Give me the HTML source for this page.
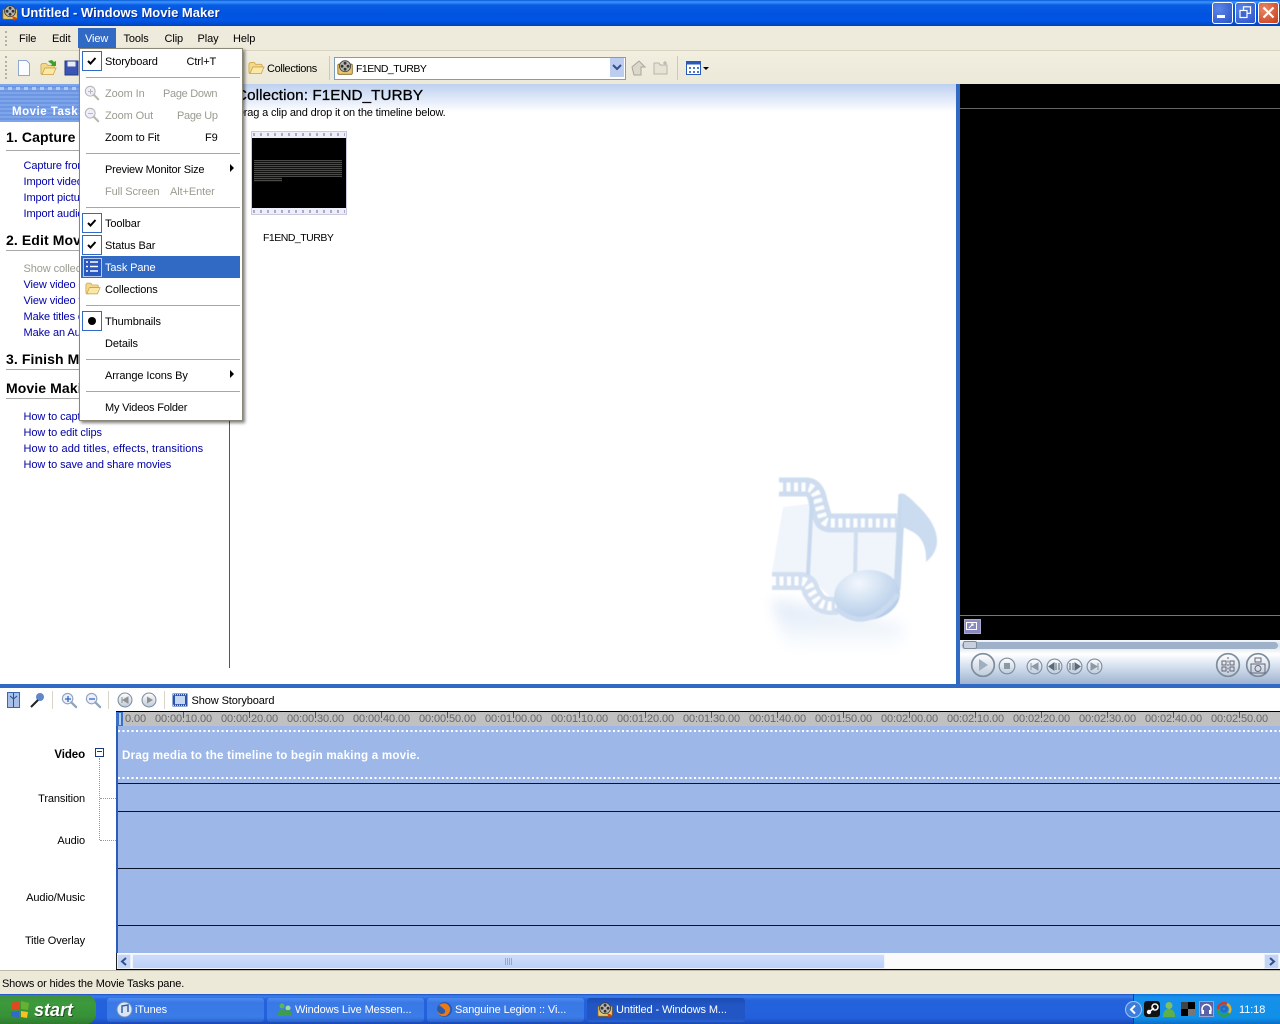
<!DOCTYPE html>
<html><head><meta charset="utf-8"><title>Untitled - Windows Movie Maker</title>
<style>
html,body{margin:0;padding:0;width:1280px;height:1024px;overflow:hidden;background:#fff}
body{position:relative;font:11px "Liberation Sans",sans-serif;color:#000;letter-spacing:-.1px}
div,span,svg{position:absolute}
span{white-space:nowrap;line-height:14px;margin-top:1px}
.l{color:#0000a8;left:23.5px}
.g{color:#9b9b90}
.h{font-weight:bold;font-size:14px;left:6px;line-height:16px;height:16px;letter-spacing:.1px}
.u{left:6px;width:216px;height:1px;background:#a8a8a8}
.sep{left:86px;width:154px;height:1px;background:#aca899}
.cb{left:82px;width:18px;height:18px;border:1px solid #316ac5}
.tr{left:118px;width:1162px;height:1px;background:#0a1428}
.rl{top:711px;color:#666;font-size:11px;letter-spacing:-.1px}
.tl{text-align:right;right:1195px}
.tb{top:998px;height:24px;background:linear-gradient(#4c8cf0,#3a78e6 20%,#3b7ce8 80%,#2c62c8);border-radius:3px;color:#fff}
.tb span{top:4px;left:28px;color:#fff}
.f1{font-size:10.5px;letter-spacing:-.5px}
</style></head><body>
<svg width="0" height="0" style="left:0;top:0"><defs>
<symbol id="folder" viewBox="0 0 18 16"><path d="M1 3.5 2.500 2h4L8 4h6l1 1v2H6L4 14H2L1 13z" fill="#f5d98a" stroke="#c8a048" stroke-width=".8"/><path d="M5 7h12l-3 7H2z" fill="#fbe8a6" stroke="#c8a048" stroke-width=".8"/></symbol>
<symbol id="reel" viewBox="0 0 20 20"><rect x="1" y="6" width="17" height="12" rx="1.500" fill="#e8c868" stroke="#806020"/><circle cx="9.500" cy="8.500" r="6.500" fill="#b8b8b0" stroke="#404040"/><circle cx="9.500" cy="5" r="1.700" fill="#333"/><circle cx="6" cy="8.500" r="1.700" fill="#333"/><circle cx="13" cy="8.500" r="1.700" fill="#333"/><circle cx="9.500" cy="12" r="1.700" fill="#333"/></symbol>
<symbol id="mag" viewBox="0 0 18 18"><circle cx="7" cy="7" r="5.500" fill="#eef" stroke="currentColor" stroke-width="1.200"/><path d="M11 11l5 5" stroke="currentColor" stroke-width="2.400" stroke-linecap="round"/></symbol>
<symbol id="ctl" viewBox="0 0 20 20"><circle cx="10" cy="10" r="8.700" fill="url(#cg)" stroke="#7e8c9c" stroke-width="1.300"/></symbol>
<linearGradient id="cg" x1="0" y1="0" x2="0" y2="1"><stop offset="0" stop-color="#fff"/><stop offset="1" stop-color="#bdcbdc"/></linearGradient>
<linearGradient id="rf" x1="0" y1="0" x2="0" y2="1"><stop offset="0" stop-color="#dde8f6"/><stop offset=".8" stop-color="#fff"/></linearGradient>
<radialGradient id="hd" cx=".4" cy=".25" r=".8"><stop offset="0" stop-color="#f2f7fd"/><stop offset=".6" stop-color="#c8daef"/><stop offset="1" stop-color="#b0c9e6"/></radialGradient>
<filter id="b1"><feGaussianBlur stdDeviation=".5"/></filter>
<filter id="b5"><feGaussianBlur stdDeviation="7"/></filter>
</defs></svg>

<!-- title bar -->
<div style="left:0;top:0;width:1280px;height:26px;background:linear-gradient(#0a5ad8 0,#3d95ff 2px,#0a5ce4 5px,#0053e0 55%,#0055e5 80%,#0042b8 100%)"></div>
<svg style="left:2px;top:4px" width="17" height="17"><use href="#reel" width="17" height="17"/><path d="M10 12l5 2-3 3z" fill="#d84010"/></svg>
<span style="left:21px;top:4px;color:#fff;font:bold 13px/16px 'Liberation Sans',sans-serif;letter-spacing:0;text-shadow:1px 1px #0a2f9a">Untitled - Windows Movie Maker</span>
<div style="left:1212px;top:2px;width:19px;height:20px;border:1px solid #fff;border-radius:3px;background:radial-gradient(circle at 30% 30%,#5a86e8,#2c52c8)"></div>
<div style="left:1217px;top:15px;width:8px;height:3px;background:#fff"></div>
<div style="left:1235px;top:2px;width:19px;height:20px;border:1px solid #fff;border-radius:3px;background:radial-gradient(circle at 30% 30%,#5a86e8,#2c52c8)"></div>
<svg style="left:1239px;top:6px" width="13" height="13" fill="none" stroke="#fff" stroke-width="1.200"><rect x="4.500" y=".8" width="7" height="6.500"/><rect x="1" y="4.500" width="7" height="7" fill="#3c66d4"/></svg>
<div style="left:1258px;top:2px;width:19px;height:20px;border:1px solid #fff;border-radius:3px;background:radial-gradient(circle at 30% 30%,#e88868,#c83a18)"></div>
<svg style="left:1262px;top:6px" width="13" height="13" stroke="#fff" stroke-width="2.200"><path d="M1.500 1.500l10 10M11.500 1.500l-10 10"/></svg>

<!-- menu bar and toolbar -->
<div style="left:0;top:26px;width:1280px;height:24px;background:#efebdc;border-bottom:1px solid #d8d4c2"></div>
<div style="left:0;top:51px;width:1280px;height:33px;background:linear-gradient(#f2eee0,#ede9d9)"></div>
<div style="left:5px;top:31px;width:1px;height:15px;border-left:2px dotted #b5b1a0"></div>
<div style="left:5px;top:56px;width:1px;height:23px;border-left:2px dotted #b5b1a0"></div>
<span style="left:19px;top:31px">File</span>
<span style="left:52px;top:31px">Edit</span>
<div style="left:78px;top:28px;width:38px;height:20px;background:#316ac5"></div>
<span style="left:85px;top:31px;color:#fff">View</span>
<span style="left:123.500px;top:31px">Tools</span>
<span style="left:164.500px;top:31px">Clip</span>
<span style="left:197.500px;top:31px">Play</span>
<span style="left:233px;top:31px">Help</span>
<svg style="left:16px;top:59px" width="16" height="18"><path d="M2.500 1.500h8l3 3v12h-11z" fill="#fafcff" stroke="#8fa8d0"/></svg>
<svg style="left:40px;top:59px" width="18" height="18"><use href="#folder" y="2" width="17" height="16"/><path d="M8 2l4-1 2 2 2-1v5h-5l1-2-2-1z" fill="#3ea02c"/></svg>
<svg style="left:64px;top:60px" width="15" height="16"><rect x="1" y="1" width="13" height="14" fill="#3a55b4" stroke="#223a88"/><rect x="3.500" y="1.500" width="8" height="5" fill="#e8ecf8"/></svg>
<svg style="left:248px;top:60px" width="17" height="16"><use href="#folder" width="17" height="16"/></svg>
<span style="left:267px;top:61px;letter-spacing:-.35px">Collections</span>
<div style="left:329px;top:56px;width:1px;height:24px;background:#cdc9b8"></div>
<div style="left:334px;top:57px;width:290px;height:21px;background:#fff;border:1px solid #7f9db9"></div>
<svg style="left:337px;top:59px" width="17" height="17"><use href="#reel" width="17" height="17"/></svg>
<span class="f1" style="left:356px;top:61px">F1END_TURBY</span>
<div style="left:610px;top:58px;width:14px;height:19px;background:#bccdf0"></div>
<svg style="left:612px;top:64px" width="10" height="8" fill="none" stroke="#33508e" stroke-width="2"><path d="M1 1l4 4 4-4"/></svg>
<svg style="left:630px;top:59px" width="17" height="18"><path d="M2 8l7-6 6 6h-4v8H4z" fill="#dcd9cc" stroke="#a8a69a"/></svg>
<svg style="left:653px;top:60px" width="17" height="16"><path d="M1 3h5l1 2h7v9H1z" fill="#e6e3d6" stroke="#b8b5a8"/><path d="M12 1v4M10 3h4" stroke="#b0ad9f"/></svg>
<div style="left:677px;top:56px;width:1px;height:24px;background:#cdc9b8"></div>
<svg style="left:686px;top:61px" width="15" height="14"><rect x=".5" y=".5" width="14" height="13" fill="#fff" stroke="#2a5ab8"/><rect x=".5" y=".5" width="14" height="3" fill="#2a5ab8"/><path d="M3 6h2v2H3zM7 6h2v2H7zM11 6h2v2h-2zM3 10h2v2H3zM7 10h2v2H7zM11 10h2v2h-2z" fill="#4a7ad0"/></svg>
<svg style="left:703px;top:67px" width="7" height="4"><path d="M0 0h6L3 3z"/></svg>

<!-- task pane -->
<div style="left:0;top:84px;width:229px;height:38px;background:repeating-linear-gradient(#7ea4ea 0,#7ea4ea 2px,#6d96e2 2px,#6d96e2 4px)"></div>
<div style="left:0;top:87px;width:229px;height:3px;background:repeating-linear-gradient(90deg,#b4caf2 0,#b4caf2 4px,transparent 4px,transparent 8px)"></div>
<span style="left:12px;top:104px;color:#fff;font-weight:bold;font-size:11.500px;letter-spacing:.5px">Movie Tasks</span>
<div style="left:229px;top:84px;width:1px;height:584px;background:#2a5ea8"></div>

<span class="h" style="top:128px">1. Capture Video</span><div class="u" style="top:150px"></div>
<span class="l" style="top:158px">Capture from video device</span>
<span class="l" style="top:174px">Import video</span>
<span class="l" style="top:190px">Import pictures</span>
<span class="l" style="top:206px">Import audio or music</span>
<span class="h" style="top:231px">2. Edit Movie</span><div class="u" style="top:250px"></div>
<span class="l" style="top:261px;color:#9b9b90">Show collections</span>
<span class="l" style="top:277px">View video effects</span>
<span class="l" style="top:293px">View video transitions</span>
<span class="l" style="top:309px">Make titles or credits</span>
<span class="l" style="top:325px">Make an AutoMovie</span>
<span class="h" style="top:350px">3. Finish Movie</span><div class="u" style="top:369px"></div>
<span class="h" style="top:379px">Movie Making Tips</span><div class="u" style="top:398px"></div>
<span class="l" style="top:409px">How to capture video</span>
<span class="l" style="top:425px">How to edit clips</span>
<span class="l" style="top:441px;letter-spacing:.1px">How to add titles, effects, transitions</span>
<span class="l" style="top:457px">How to save and share movies</span>

<!-- collection pane -->
<div style="left:230px;top:84px;width:726px;height:28px;background:linear-gradient(#bdd0f0,#fff)"></div>
<span style="left:236px;top:87px;font-size:15.200px;line-height:16px;-webkit-text-stroke:.3px #000;letter-spacing:.1px">Collection: F1END_TURBY</span>
<span style="left:236px;top:105px;letter-spacing:-.15px">Drag a clip and drop it on the timeline below.</span>
<div style="left:251px;top:131px;width:96px;height:84px;background:#eeeef8;outline:1px solid #c8c8de;outline-offset:-1px"></div>
<div style="left:253px;top:133px;width:92px;height:3px;background:repeating-linear-gradient(90deg,#aaaacb 0,#aaaacb 2px,transparent 2px,transparent 7px)"></div>
<div style="left:253px;top:210px;width:92px;height:3px;background:repeating-linear-gradient(90deg,#aaaacb 0,#aaaacb 2px,transparent 2px,transparent 7px)"></div>
<div style="left:252px;top:138px;width:94px;height:70px;background:#000"></div>
<div style="left:254px;top:160px;width:88px;height:22px;background:repeating-linear-gradient(#4a4a48 0,#4a4a48 1px,#111 1px,#111 2px)"></div>
<div style="left:282px;top:177px;width:62px;height:6px;background:#000"></div>
<span class="f1" style="left:263px;top:230px">F1END_TURBY</span>

<!-- watermark -->
<svg style="left:760px;top:470px" width="190" height="205" viewBox="760 470 190 205">
<path d="M772 600 845 612 905 625 895 665H790z" fill="url(#rf)" filter="url(#b5)"/>
<g filter="url(#b1)">
<path d="M783 507 815 503 822 530 897 520 895 585 860 575 838 605 818 585 772 572z" fill="#f0f5fb"/>
<path d="M779 487h28q9 1 11 15l5 17q2 4 8 4h66" fill="none" stroke="#cddcef" stroke-width="19"/>
<path d="M779 487h28q9 1 11 15l5 17q2 4 8 4h66" fill="none" stroke="#fdfeff" stroke-width="9" stroke-dasharray="4 3.500"/>
<path d="M772 581h28q9 0 11 10l5 8q4 6 14 7h8" fill="none" stroke="#d2dff0" stroke-width="18"/>
<path d="M772 581h28q9 0 11 10l5 8q4 6 14 7h8" fill="none" stroke="#fdfeff" stroke-width="9" stroke-dasharray="4 3.500"/>
<path d="M812 497 808 575" stroke="#c8d8ee" stroke-width="4" fill="none"/>
<path d="M856 530 855 580" stroke="#d0def0" stroke-width="4" fill="none"/>
<path d="M902 494 897 590" stroke="#c8d9ee" stroke-width="7" fill="none"/>
<path d="M901 493q7 2 14 10q22 20 22 38q0 12-11 21q1-22-13-30l-12-6z" fill="#cbdbf0"/>
<ellipse cx="867" cy="595" rx="33" ry="25" fill="url(#hd)" transform="rotate(-6 867 595)"/>
<path d="M836 608q30 28 62-14" stroke="#cadaef" stroke-width="5" fill="none"/>
</g>
</svg>

<!-- preview -->
<div style="left:956px;top:84px;width:4px;height:600px;background:#316ac5"></div>
<div style="left:960px;top:84px;width:320px;height:556px;background:#000"></div>
<div style="left:960px;top:108px;width:320px;height:1px;background:#666"></div>
<div style="left:960px;top:615px;width:320px;height:1px;background:#777"></div>
<div style="left:964px;top:619px;width:15px;height:13px;background:#8a8ac0;border:1px solid #a9a9d2"></div>
<svg style="left:966px;top:622px" width="12" height="9" fill="none" stroke="#fff"><rect x=".5" y=".5" width="10" height="7"/><path d="M3 6l4-4M5 2h2v2"/></svg>
<div style="left:960px;top:640px;width:320px;height:44px;background:linear-gradient(#f4f7fb 0,#d7e1ef 12%,#fff 32%,#dce6f3 55%,#9fb3d0 100%)"></div>
<div style="left:962px;top:642px;width:316px;height:7px;border-radius:4px;background:#9fb1c9"></div>
<div style="left:963px;top:641px;width:14px;height:8px;border-radius:2px;background:#c7d0dc;border:1px solid #7d8a98;box-sizing:border-box"></div>
<svg style="left:970px;top:652px" width="26" height="27"><use href="#ctl" width="26" height="26"/><path d="M9 7l9 6-9 6z" fill="#a0afc0"/></svg>
<svg style="left:998px;top:657px" width="18" height="18"><use href="#ctl" width="18" height="18"/><rect x="6" y="6" width="6" height="6" fill="#8a98a8"/></svg>
<svg style="left:1026px;top:658px" width="18" height="17"><use href="#ctl" width="17" height="17"/><path d="M5 5v7M12 5l-6 3.500 6 3.500z" stroke="#8a98a8" fill="#8a98a8"/></svg>
<svg style="left:1046px;top:658px" width="18" height="17"><use href="#ctl" width="17" height="17"/><path d="M8 5 3 8.500 8 12zM10 5v7M13 5v7" stroke="#5a6878" fill="#5a6878"/></svg>
<svg style="left:1066px;top:658px" width="18" height="17"><use href="#ctl" width="17" height="17"/><path d="M4 5v7M7 5v7M9 5l5 3.500L9 12z" stroke="#5a6878" fill="#5a6878"/></svg>
<svg style="left:1086px;top:658px" width="18" height="17"><use href="#ctl" width="17" height="17"/><path d="M12 5v7M5 5l6 3.500L5 12z" stroke="#8a98a8" fill="#8a98a8"/></svg>
<svg style="left:1215px;top:652px" width="27" height="27"><use href="#ctl" width="26" height="26"/><path d="M13 5v17" stroke="#667" stroke-dasharray="2 1.500"/><rect x="7" y="9" width="4" height="4" fill="none" stroke="#667"/><rect x="15" y="9" width="4" height="4" fill="none" stroke="#667"/><rect x="7" y="15" width="4" height="4" fill="none" stroke="#667"/><rect x="15" y="15" width="4" height="4" fill="none" stroke="#667"/></svg>
<svg style="left:1245px;top:652px" width="27" height="27"><use href="#ctl" width="26" height="26"/><rect x="6" y="12" width="14" height="9" fill="none" stroke="#667"/><circle cx="13" cy="16.500" r="3" fill="none" stroke="#667"/><rect x="10" y="6" width="6" height="4" fill="none" stroke="#667"/></svg>

<!-- splitter -->
<div style="left:0;top:684px;width:1280px;height:4px;background:#316ac5"></div>

<!-- timeline toolbar -->
<svg style="left:7px;top:692px" width="13" height="16"><rect x=".5" y=".5" width="12" height="15" fill="#a8c0e8" stroke="#3a68b0"/><path d="M6.500 1v14M3 4l3.500 3L10 4" stroke="#23508e" fill="none"/></svg>
<svg style="left:29px;top:692px" width="17" height="16"><circle cx="11" cy="5" r="4" fill="#6088c8"/><path d="M9 8 2 15" stroke="#222" stroke-width="2"/></svg>
<div style="left:52px;top:691px;width:1px;height:18px;background:#d8d4c6"></div>
<svg style="left:61px;top:692px;color:#90a4b8" width="17" height="17"><use href="#mag" width="17" height="17"/><path d="M4 7h6M7 4v6" stroke="#2868c8" stroke-width="1.300"/></svg>
<svg style="left:85px;top:692px;color:#90a4b8" width="17" height="17"><use href="#mag" width="17" height="17"/><path d="M4 7h6" stroke="#2868c8" stroke-width="1.300"/></svg>
<div style="left:108px;top:691px;width:1px;height:18px;background:#d8d4c6"></div>
<svg style="left:117px;top:692px" width="16" height="16"><use href="#ctl" width="16" height="16"/><path d="M5 5v6M11 5 6 8l5 3z" stroke="#909090" fill="#909090"/></svg>
<svg style="left:141px;top:692px" width="16" height="16"><use href="#ctl" width="16" height="16"/><path d="M6 4.500l6 3.500-6 3.500z" fill="#909090"/></svg>
<div style="left:164px;top:691px;width:1px;height:18px;background:#d8d4c6"></div>
<svg style="left:172px;top:693px" width="16" height="14"><rect x=".5" y=".5" width="15" height="13" fill="#2a50a8"/><rect x="3" y="3" width="10" height="8" fill="#c4d8f4"/><path d="M1 1.700h14M1 12.300h14" stroke="#fff" stroke-dasharray="1 1"/></svg>
<span style="left:191.500px;top:693px">Show Storyboard</span>

<!-- ruler -->
<div style="left:116px;top:711px;width:1164px;height:15px;background:#c0c0c0;border-top:1px solid #000;border-left:1px solid #000;box-sizing:border-box;overflow:hidden"></div>
<span class="rl" style="left:125px">0.00</span><span class="rl" style="left:155px">00:00:10.00</span><span class="rl" style="left:221px">00:00:20.00</span><span class="rl" style="left:287px">00:00:30.00</span><span class="rl" style="left:353px">00:00:40.00</span><span class="rl" style="left:419px">00:00:50.00</span><span class="rl" style="left:485px">00:01:00.00</span><span class="rl" style="left:551px">00:01:10.00</span><span class="rl" style="left:617px">00:01:20.00</span><span class="rl" style="left:683px">00:01:30.00</span><span class="rl" style="left:749px">00:01:40.00</span><span class="rl" style="left:815px">00:01:50.00</span><span class="rl" style="left:881px">00:02:00.00</span><span class="rl" style="left:947px">00:02:10.00</span><span class="rl" style="left:1013px">00:02:20.00</span><span class="rl" style="left:1079px">00:02:30.00</span><span class="rl" style="left:1145px">00:02:40.00</span><span class="rl" style="left:1211px">00:02:50.00</span>
<div style="left:183px;top:712px;width:1097px;height:6px;background:repeating-linear-gradient(90deg,#555 0,#555 1px,transparent 1px,transparent 66px)"></div>
<div style="left:116px;top:712px;width:7px;height:14px;background:#3c70c4"></div>
<div style="left:119px;top:713px;width:2px;height:12px;background:#b8ccec"></div>

<!-- tracks -->
<div style="left:116px;top:726px;width:1164px;height:227px;background:#9db8e8"></div>
<div style="left:116px;top:726px;width:2px;height:227px;background:#2c5cb8"></div>
<div style="left:118px;top:730px;width:1162px;height:2px;background:repeating-linear-gradient(90deg,#fff 0,#fff 2px,transparent 2px,transparent 4.500px)"></div>
<div style="left:118px;top:777px;width:1162px;height:2px;background:repeating-linear-gradient(90deg,#fff 0,#fff 2px,transparent 2px,transparent 4.500px)"></div>
<div class="tr" style="top:783px"></div><div class="tr" style="top:811px"></div><div class="tr" style="top:868px"></div><div class="tr" style="top:925px"></div>
<span style="left:122px;top:748px;color:#fff;font-weight:bold;font-size:11.600px;letter-spacing:.22px">Drag media to the timeline to begin making a movie.</span>
<span class="tl" style="top:747px;font-weight:bold;font-size:11.500px">Video</span>
<div style="left:95px;top:748px;width:7px;height:7px;border:1px solid #1a3a80;background:#fff"></div>
<div style="left:97px;top:751px;width:5px;height:1px;background:#1a3a80"></div>
<div style="left:99px;top:758px;height:82px;width:0;border-left:1px dotted #999"></div>
<div style="left:100px;top:798px;width:16px;height:0;border-top:1px dotted #999"></div>
<div style="left:100px;top:840px;width:16px;height:0;border-top:1px dotted #999"></div>
<span class="tl" style="top:791px">Transition</span>
<span class="tl" style="top:833px">Audio</span>
<span class="tl" style="top:890px">Audio/Music</span>
<span class="tl" style="top:933px">Title Overlay</span>

<!-- scrollbar -->
<div style="left:116px;top:953px;width:1164px;height:16px;background:#fafafa"></div>
<div style="left:117px;top:954px;width:14px;height:15px;background:#c4d4f4;border:1px solid #e6eefc;box-sizing:border-box"></div>
<svg style="left:120px;top:957px" width="8" height="9" fill="none" stroke="#33508e" stroke-width="2"><path d="M6 1 2 4.500l4 3.500"/></svg>
<div style="left:132px;top:954px;width:753px;height:15px;background:linear-gradient(#cddcfb,#bcd0f8);border:1px solid #eef3fd;box-sizing:border-box;border-radius:2px"></div>
<div style="left:505px;top:958px;width:8px;height:7px;background:repeating-linear-gradient(90deg,#8fa8d8 0,#8fa8d8 1px,transparent 1px,transparent 2px)"></div>
<div style="left:1264px;top:954px;width:15px;height:15px;background:#c4d4f4;border:1px solid #e6eefc;box-sizing:border-box"></div>
<svg style="left:1268px;top:957px" width="8" height="9" fill="none" stroke="#33508e" stroke-width="2"><path d="M2 1l4 3.500-4 3.500"/></svg>
<div style="left:116px;top:969px;width:1164px;height:1px;background:#000"></div>
<div style="left:116px;top:953px;width:1px;height:16px;background:#222"></div>

<!-- status bar -->
<div style="left:0;top:970px;width:1280px;height:25px;background:#ece9d8;border-top:1px solid #bdbaaa;box-sizing:border-box"></div>
<span style="left:2px;top:976px;letter-spacing:-.15px">Shows or hides the Movie Tasks pane.</span>

<!-- taskbar -->
<div style="left:0;top:994px;width:1280px;height:30px;background:linear-gradient(#1f4fc0 0,#3a80ea 2px,#2463dc 6px,#2460dc 80%,#1a48b4 100%)"></div>
<div style="left:0;top:995px;width:96px;height:29px;background:linear-gradient(#3f8f3f,#3b9a3b 30%,#379037 75%,#2e7a2e);border-radius:0 10px 10px 0"></div>
<svg style="left:10px;top:1000px" width="20" height="19"><path d="M1 3l8-2v8l-8 1z" fill="#e04820"/><path d="M11 1l8 2-1 7-7-1z" fill="#68b030"/><path d="M1 12l8-1v7l-8-2z" fill="#3468d0"/><path d="M11 11l7 1-1 6-6-1z" fill="#f8c020"/></svg>
<span style="left:34px;top:999px;color:#fff;font:italic bold 18px/20px 'Liberation Sans',sans-serif;letter-spacing:0;text-shadow:1px 1px #204f20">start</span>

<div class="tb" style="left:107px;width:157px"><span>iTunes</span></div>
<svg style="left:116px;top:1001px" width="17" height="17"><circle cx="8.500" cy="8.500" r="7.500" fill="#dbe6f4" stroke="#7090c0"/><path d="M6 12V5l6-1v7" fill="none" stroke="#3060b0" stroke-width="1.500"/></svg>
<div class="tb" style="left:267px;width:157px"><span>Windows Live Messen...</span></div>
<svg style="left:277px;top:1002px" width="15" height="15"><circle cx="5" cy="4" r="2.500" fill="#58b858"/><circle cx="11" cy="6" r="2.500" fill="#a0d8a0"/><path d="M1 14q0-7 4-7t4 7zM7 14q0-6 4-6t3 6z" fill="#3c9e4c"/></svg>
<div class="tb" style="left:427px;width:157px"><span>Sanguine Legion :: Vi...</span></div>
<svg style="left:436px;top:1001px" width="17" height="17"><circle cx="8.500" cy="8.500" r="7.500" fill="#2c5aa8"/><path d="M3 4q5-3 8-1 4 3 3 7-2 6-8 5-5-2-5-6 1 3 4 4 5 0 4-4-3-3-6-5z" fill="#e87a18"/></svg>
<div class="tb" style="left:587px;width:158px;background:linear-gradient(#1c4cb4,#2156c4 30%,#2156c4 85%,#2a64d0)"><span style="left:29px">Untitled - Windows M...</span></div>
<svg style="left:597px;top:1001px" width="17" height="17"><use href="#reel" width="17" height="17"/><path d="M10 12l5 2-3 3z" fill="#d84010"/></svg>

<div style="left:1133px;top:994px;width:147px;height:30px;background:linear-gradient(#0e72d8,#1790ea 10%,#1090e8 80%,#0a6cc8);border-left:1px solid #10409c;box-sizing:border-box"></div>
<svg style="left:1125px;top:1001px" width="17" height="17"><circle cx="8.500" cy="8.500" r="8" fill="#3c7cdc" stroke="#a6c6f0"/><path d="M10 4.500 6 8.500l4 4" fill="none" stroke="#fff" stroke-width="2"/></svg>
<svg style="left:1144px;top:1001px" width="16" height="16"><rect width="16" height="16" rx="3" fill="#111"/><circle cx="11" cy="6" r="3" fill="none" stroke="#fff" stroke-width="1.500"/><circle cx="5" cy="11" r="2.200" fill="#fff"/><path d="M5 11l5-4" stroke="#fff" stroke-width="1.500"/></svg>
<svg style="left:1162px;top:1001px" width="14" height="17"><circle cx="7" cy="4.500" r="3.500" fill="#80c060"/><path d="M1 16q0-8 6-8t6 8z" fill="#60b048"/></svg>
<svg style="left:1181px;top:1002px" width="14" height="14"><rect width="7" height="7" fill="#444"/><rect x="7" width="7" height="7" fill="#000"/><rect y="7" width="7" height="7" fill="#000"/><rect x="7" y="7" width="7" height="7" fill="#777"/></svg>
<svg style="left:1199px;top:1001px" width="15" height="16"><rect x=".5" y=".5" width="14" height="15" fill="#5a62a8" stroke="#9ca0d0"/><path d="M3 10V8a4.500 4.500 0 0 1 9 0v2" fill="none" stroke="#fff" stroke-width="1.500"/><rect x="2.500" y="9" width="2.500" height="4" fill="#fff"/><rect x="10" y="9" width="2.500" height="4" fill="#fff"/></svg>
<svg style="left:1216px;top:1001px" width="16" height="16" fill="none" stroke-width="2.500"><path d="M2 8a6 6 0 0 1 9-5" stroke="#d83820"/><path d="M11 3a6 6 0 0 1 2 9" stroke="#e8b020"/><path d="M13 12a6 6 0 0 1-11-4" stroke="#30a040"/><circle cx="8" cy="8" r="2.500" stroke="#2868c0"/></svg>
<span style="left:1239px;top:1002px;color:#fff">11:18</span>

<!-- open View menu -->
<div style="left:79px;top:48px;width:162px;height:371px;background:#fff;border:1px solid #8a8776;box-shadow:2px 2px 3px rgba(0,0,0,.5)"></div>
<div class="cb" style="top:51px"></div>
<svg style="left:85px;top:55px" width="13" height="12" fill="none" stroke="#000" stroke-width="2"><path d="M3 6l2.500 2.500 5-5.500"/></svg>
<span style="left:105px;top:54px">Storyboard</span><span style="left:186.500px;top:54px">Ctrl+T</span>
<div class="sep" style="top:77px"></div>
<svg style="left:84px;top:85px;color:#b9b9b0" width="16" height="16"><use href="#mag" width="16" height="16"/><path d="M4 6.500h5M6.500 4v5" stroke="#b9b9b0"/></svg>
<span class="g" style="left:105px;top:86px">Zoom In</span><span class="g" style="left:163px;top:86px;letter-spacing:-.3px">Page Down</span>
<svg style="left:84px;top:107px;color:#b9b9b0" width="16" height="16"><use href="#mag" width="16" height="16"/><path d="M4 6.500h5" stroke="#b9b9b0"/></svg>
<span class="g" style="left:105px;top:108px">Zoom Out</span><span class="g" style="left:177px;top:108px;letter-spacing:-.3px">Page Up</span>
<span style="left:105px;top:130px">Zoom to Fit</span><span style="left:205px;top:130px">F9</span>
<div class="sep" style="top:153px"></div>
<span style="left:105px;top:162px;letter-spacing:-.2px">Preview Monitor Size</span>
<svg style="left:229px;top:164px" width="6" height="9"><path d="M1 0l4 4-4 4z"/></svg>
<span class="g" style="left:105px;top:184px">Full Screen</span><span class="g" style="left:170px;top:184px">Alt+Enter</span>
<div class="sep" style="top:207px"></div>
<div class="cb" style="top:213px"></div>
<svg style="left:85px;top:217px" width="13" height="12" fill="none" stroke="#000" stroke-width="2"><path d="M3 6l2.500 2.500 5-5.500"/></svg>
<span style="left:105px;top:216px">Toolbar</span>
<div class="cb" style="top:235px"></div>
<svg style="left:85px;top:239px" width="13" height="12" fill="none" stroke="#000" stroke-width="2"><path d="M3 6l2.500 2.500 5-5.500"/></svg>
<span style="left:105px;top:238px">Status Bar</span>
<div style="left:81px;top:256px;width:159px;height:22px;background:#316ac5"></div>
<div style="left:83px;top:258px;width:17px;height:17px;background:#2858c0;border:1px solid #b8c8ea"></div>
<svg style="left:85px;top:260px" width="14" height="14" stroke="#fff" stroke-width="1.500"><path d="M1 2h2M5 2h8M1 6.500h2M5 6.500h8M1 11h2M5 11h8"/></svg>
<span style="left:105px;top:260px;color:#fff">Task Pane</span>
<svg style="left:85px;top:281px" width="16" height="15"><use href="#folder" width="16" height="15"/></svg>
<span style="left:105px;top:282px">Collections</span>
<div class="sep" style="top:305px"></div>
<div class="cb" style="top:311px"></div>
<div style="left:88px;top:317px;width:8px;height:8px;border-radius:50%;background:#000"></div>
<span style="left:105px;top:314px">Thumbnails</span>
<span style="left:105px;top:336px">Details</span>
<div class="sep" style="top:359px"></div>
<span style="left:105px;top:368px">Arrange Icons By</span>
<svg style="left:229px;top:370px" width="6" height="9"><path d="M1 0l4 4-4 4z"/></svg>
<div class="sep" style="top:391px"></div>
<span style="left:105px;top:400px;letter-spacing:-.2px">My Videos Folder</span>
</body></html>
